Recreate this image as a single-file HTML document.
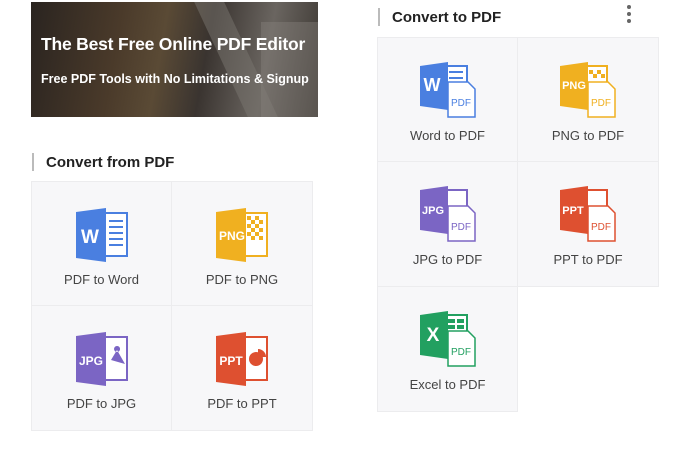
<!DOCTYPE html>
<html><head><meta charset="utf-8"><style>
*{margin:0;padding:0;box-sizing:border-box}
body{width:680px;height:450px;background:#fff;position:relative;overflow:hidden;font-family:"Liberation Sans",sans-serif}
.banner{position:absolute;left:31px;top:2px;width:287px;height:115px;background:linear-gradient(100deg,#2a2420 0%,#4a3a2a 30%,#5a4a35 45%,#3a3430 60%,#6a6560 80%,#3a3530 100%);overflow:hidden}
.banner .t1{position:absolute;left:10px;top:32px;color:#fff;font-weight:bold;font-size:17.5px;letter-spacing:-0.2px}
.banner .t2{position:absolute;left:10px;top:70px;color:#fff;font-weight:bold;font-size:12.5px}
.h{position:absolute;font-weight:bold;font-size:15px;color:#222}
.bar{position:absolute;width:2px;height:18px;background:#bbb}
.cell{position:absolute;width:141px;height:125px;border-right:1px solid #ececee;border-bottom:1px solid #ececee;background:#f7f7f9}
.cell svg{position:absolute;left:50%;transform:translateX(-50%)}
.cell .l{position:absolute;left:0;right:0;top:90px;text-align:center;font-size:13px;color:#444}
.dot{position:absolute;left:627px;width:4px;height:4px;border-radius:2px;background:#666}
</style></head><body>
<div class="banner">
<div style="position:absolute;left:190px;top:0;width:30px;height:115px;background:#7a7570;transform:skewX(25deg);opacity:.5"></div>
<div style="position:absolute;left:230px;top:20px;width:57px;height:95px;background:#8a8580;opacity:.4"></div>
<div class="t1">The Best Free Online PDF Editor</div>
<div class="t2">Free PDF Tools with No Limitations &amp; Signup</div>
</div>

<div class="bar" style="left:32px;top:153px"></div>
<div class="h" style="left:46px;top:154px">Convert from PDF</div>
<div class="bar" style="left:378px;top:8px"></div>
<div class="h" style="left:392px;top:9px">Convert to PDF</div>
<div class="dot" style="top:5px"></div><div class="dot" style="top:12px"></div><div class="dot" style="top:19px"></div>

<!-- left grid -->
<div class="cell" style="left:31px;top:181px;border-left:1px solid #ececee;border-top:1px solid #ececee">
<svg style="top:26px" width="54" height="54" viewBox="0 0 54 54"><rect x="30" y="5" width="22" height="43" fill="#fff" stroke="#4a7fe0" stroke-width="2"/><g stroke="#4a7fe0" stroke-width="2"><line x1="34" y1="13" x2="48" y2="13"/><line x1="34" y1="19" x2="48" y2="19"/><line x1="34" y1="25" x2="48" y2="25"/><line x1="34" y1="31" x2="48" y2="31"/><line x1="34" y1="37" x2="48" y2="37"/></g><polygon points="1,4 31,0 31,54 1,50" fill="#4a7fe0"/><text x="15" y="35" fill="#fff" font-size="19" font-weight="bold" text-anchor="middle" font-family="Liberation Sans">W</text></svg>
<div class="l">PDF to Word</div></div>
<div class="cell" style="left:172px;top:181px;border-top:1px solid #ececee">
<svg style="top:26px" width="54" height="54" viewBox="0 0 54 54"><rect x="30" y="5" width="22" height="43" fill="#fff" stroke="#f0b020" stroke-width="2"/><g fill="#f0b020"><rect x="32" y="8" width="4" height="4"/><rect x="40" y="8" width="4" height="4"/><rect x="36" y="12" width="4" height="4"/><rect x="44" y="12" width="4" height="4"/><rect x="32" y="16" width="4" height="4"/><rect x="40" y="16" width="4" height="4"/><rect x="36" y="20" width="4" height="4"/><rect x="44" y="20" width="4" height="4"/><rect x="32" y="24" width="4" height="4"/><rect x="40" y="24" width="4" height="4"/><rect x="36" y="28" width="4" height="4"/><rect x="44" y="28" width="4" height="4"/></g><polygon points="1,4 31,0 31,54 1,50" fill="#f0b020"/><text x="17" y="32" fill="#fff" font-size="12" font-weight="bold" text-anchor="middle" font-family="Liberation Sans">PNG</text></svg>
<div class="l">PDF to PNG</div></div>
<div class="cell" style="left:31px;top:306px;border-left:1px solid #ececee">
<svg style="top:26px" width="54" height="54" viewBox="0 0 54 54"><rect x="30" y="5" width="22" height="43" fill="#fff" stroke="#7b65c4" stroke-width="2"/><path d="M36 28 l6 -10 l8 14 z M42 14 a3 3 0 1 0 .1 0" fill="#7b65c4"/><polygon points="1,4 31,0 31,54 1,50" fill="#7b65c4"/><text x="16" y="33" fill="#fff" font-size="12" font-weight="bold" text-anchor="middle" font-family="Liberation Sans">JPG</text></svg>
<div class="l">PDF to JPG</div></div>
<div class="cell" style="left:172px;top:306px">
<svg style="top:26px" width="54" height="54" viewBox="0 0 54 54"><rect x="30" y="5" width="22" height="43" fill="#fff" stroke="#de5030" stroke-width="2"/><circle cx="41" cy="27" r="7" fill="#de5030"/><path d="M43 17 a8 8 0 0 1 8 8 h-8z" fill="#de5030"/><polygon points="1,4 31,0 31,54 1,50" fill="#de5030"/><text x="16" y="33" fill="#fff" font-size="12" font-weight="bold" text-anchor="middle" font-family="Liberation Sans">PPT</text></svg>
<div class="l">PDF to PPT</div></div>

<!-- right grid -->
<div class="cell" style="left:377px;top:37px;border-left:1px solid #ececee;border-top:1px solid #ececee">
<svg style="top:24px" width="58" height="56" viewBox="0 0 58 56"><rect x="26" y="4" width="22" height="36" fill="#fff" stroke="#4a7fe0" stroke-width="2"/><g stroke="#4a7fe0" stroke-width="2"><line x1="30" y1="10" x2="44" y2="10"/><line x1="30" y1="16" x2="44" y2="16"/></g><polygon points="1,4 29,0 29,48 1,44" fill="#4a7fe0"/><text x="13" y="29" fill="#fff" font-size="18" font-weight="bold" text-anchor="middle" font-family="Liberation Sans">W</text><path d="M29 20 h20 l7 7 v28 h-27z" fill="#fff" stroke="#4a7fe0" stroke-width="1.5"/><text x="42" y="44" fill="#4a7fe0" font-size="10" text-anchor="middle" font-family="Liberation Sans">PDF</text></svg>
<div class="l">Word to PDF</div></div>
<div class="cell" style="left:518px;top:37px;border-top:1px solid #ececee">
<svg style="top:24px" width="58" height="56" viewBox="0 0 58 56"><rect x="26" y="4" width="22" height="36" fill="#fff" stroke="#f0b020" stroke-width="2"/><g fill="#f0b020"><rect x="30" y="8" width="4" height="4"/><rect x="38" y="8" width="4" height="4"/><rect x="34" y="12" width="4" height="4"/><rect x="42" y="12" width="4" height="4"/></g><polygon points="1,4 29,0 29,48 1,44" fill="#f0b020"/><text x="15" y="27" fill="#fff" font-size="11" font-weight="bold" text-anchor="middle" font-family="Liberation Sans">PNG</text><path d="M29 20 h20 l7 7 v28 h-27z" fill="#fff" stroke="#f0b020" stroke-width="1.5"/><text x="42" y="44" fill="#f0b020" font-size="10" text-anchor="middle" font-family="Liberation Sans">PDF</text></svg>
<div class="l">PNG to PDF</div></div>
<div class="cell" style="left:377px;top:162px;border-left:1px solid #ececee">
<svg style="top:24px" width="58" height="56" viewBox="0 0 58 56"><rect x="26" y="4" width="22" height="36" fill="#fff" stroke="#7b65c4" stroke-width="2"/><polygon points="1,4 29,0 29,48 1,44" fill="#7b65c4"/><text x="14" y="28" fill="#fff" font-size="11" font-weight="bold" text-anchor="middle" font-family="Liberation Sans">JPG</text><path d="M29 20 h20 l7 7 v28 h-27z" fill="#fff" stroke="#7b65c4" stroke-width="1.5"/><text x="42" y="44" fill="#7b65c4" font-size="10" text-anchor="middle" font-family="Liberation Sans">PDF</text></svg>
<div class="l">JPG to PDF</div></div>
<div class="cell" style="left:518px;top:162px">
<svg style="top:24px" width="58" height="56" viewBox="0 0 58 56"><rect x="26" y="4" width="22" height="36" fill="#fff" stroke="#de5030" stroke-width="2"/><polygon points="1,4 29,0 29,48 1,44" fill="#de5030"/><text x="14" y="28" fill="#fff" font-size="11" font-weight="bold" text-anchor="middle" font-family="Liberation Sans">PPT</text><path d="M29 20 h20 l7 7 v28 h-27z" fill="#fff" stroke="#de5030" stroke-width="1.5"/><text x="42" y="44" fill="#de5030" font-size="10" text-anchor="middle" font-family="Liberation Sans">PDF</text></svg>
<div class="l">PPT to PDF</div></div>
<div class="cell" style="left:377px;top:287px;border-left:1px solid #ececee">
<svg style="top:24px" width="58" height="56" viewBox="0 0 58 56"><rect x="26" y="4" width="22" height="36" fill="#fff" stroke="#22a060" stroke-width="2"/><g fill="#22a060"><rect x="29" y="8" width="7" height="4"/><rect x="38" y="8" width="7" height="4"/><rect x="29" y="14" width="7" height="4"/><rect x="38" y="14" width="7" height="4"/></g><polygon points="1,4 29,0 29,48 1,44" fill="#22a060"/><text x="14" y="30" fill="#fff" font-size="19" font-weight="bold" text-anchor="middle" font-family="Liberation Sans">X</text><path d="M29 20 h20 l7 7 v28 h-27z" fill="#fff" stroke="#22a060" stroke-width="1.5"/><text x="42" y="44" fill="#22a060" font-size="10" text-anchor="middle" font-family="Liberation Sans">PDF</text></svg>
<div class="l">Excel to PDF</div></div>
</body></html>
